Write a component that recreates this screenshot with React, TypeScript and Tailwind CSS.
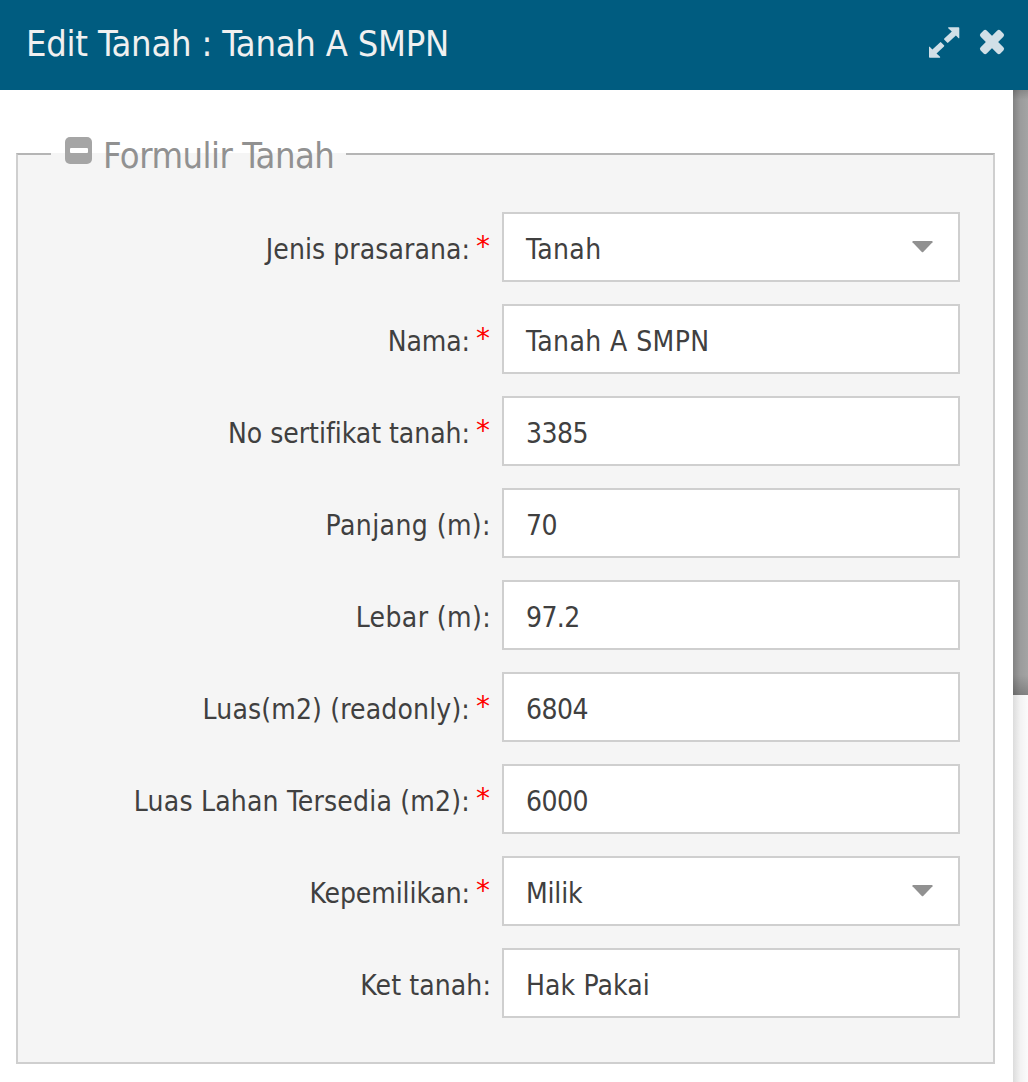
import clsx from "clsx";

type Field = {
  label: string;
  value: string;
  required?: boolean;
  select?: boolean;
  labelClass?: string;
  valueClass?: string;
};

const fields: Field[] = [
  {
    label: "Jenis prasarana:",
    value: "Tanah",
    required: true,
    select: true,
    labelClass: "tracking-[0.07px]",
    valueClass: "tracking-[0.4px]",
  },
  {
    label: "Nama:",
    value: "Tanah A SMPN",
    required: true,
    labelClass: "tracking-[-0.1px]",
    valueClass: "tracking-[0.42px]",
  },
  {
    label: "No sertifikat tanah:",
    value: "3385",
    required: true,
    labelClass: "tracking-[-0.03px]",
    valueClass: "tracking-[-0.5px]",
  },
  {
    label: "Panjang (m):",
    value: "70",
    labelClass: "-mr-px tracking-[0.42px]",
    valueClass: "tracking-[-0.5px]",
  },
  {
    label: "Lebar (m):",
    value: "97.2",
    labelClass: "-mr-px tracking-[0.38px]",
    valueClass: "tracking-[-0.6px]",
  },
  {
    label: "Luas(m2) (readonly):",
    value: "6804",
    required: true,
    labelClass: "tracking-[0.15px]",
    valueClass: "tracking-[-0.5px]",
  },
  {
    label: "Luas Lahan Tersedia (m2):",
    value: "6000",
    required: true,
    labelClass: "tracking-[0.2px]",
    valueClass: "tracking-[-0.5px]",
  },
  {
    label: "Kepemilikan:",
    value: "Milik",
    required: true,
    select: true,
    labelClass: "tracking-[-0.1px]",
    valueClass: "tracking-[-0.2px]",
  },
  {
    label: "Ket tanah:",
    value: "Hak Pakai",
    labelClass: "-mr-px tracking-[0.1px]",
    valueClass: "tracking-[0.12px]",
  },
];

const ExpandIcon = () => (
  <svg width="32" height="33" viewBox="0 0 32 33" fill="#d1dfe7">
    <path
      id="arrow"
      d="M20.2 1.300H30.500q.8 0 .8.800V12.300H30.600L27.900 9.600 20.300 16.600q-.6.6-1.200 0L16.300 13.800q-.6-.6 0-1.200L23.800 5.500 20.200 2.300z"
    />
    <use href="#arrow" transform="rotate(180 16.150 16.500)" />
  </svg>
);

const CloseIcon = () => (
  <svg width="26" height="26" viewBox="0 0 26 26" fill="#d1dfe7">
    <rect x="-1" y="8.700" width="28" height="8.600" rx="2.200" transform="rotate(45 13 13)" />
    <rect x="-1" y="8.700" width="28" height="8.600" rx="2.200" transform="rotate(-45 13 13)" />
  </svg>
);

const FormRow = ({ field }: { field: Field }) => (
  <div className="flex h-[70px] items-center gap-3">
    <div className="flex flex-1 items-center justify-end whitespace-nowrap">
      <span className={clsx("pt-[5px] text-[28px]", field.labelClass)}>{field.label}</span>
      {field.required && (
        <span className="ml-1.5 font-['DejaVu_Sans',sans-serif] text-[28px] text-[#ff0000]">*</span>
      )}
    </div>
    <div className="flex h-full w-[458px] items-center justify-between border-2 border-[#cfcfcf] bg-white pl-[22px] pr-[25px]">
      <span className={clsx("whitespace-nowrap pt-[5px] text-[28px]", field.valueClass)}>
        {field.value}
      </span>
      {field.select && (
        <svg width="21" height="12" viewBox="0 0 21 12" fill="#919191">
          <path d="M1 0h19q1 .5.500 1.300L11.200 11q-.7.7-1.400 0L.5 1.300Q0 .5 1 0z" />
        </svg>
      )}
    </div>
  </div>
);

const App = () => {
  return (
    <div className="flex h-[1082px] w-[1028px] flex-col overflow-hidden bg-white font-['DejaVu_Sans_Condensed','DejaVu_Sans',sans-serif] text-[#404040]">
      <header className="flex h-[90px] shrink-0 items-center bg-[#005c80] pl-[26px] pr-[23px]">
        <h1 className="flex-1 whitespace-nowrap pb-0.5 text-[36px] tracking-[-0.22px] text-[#f0f0f0]">
          Edit Tanah : Tanah A SMPN
        </h1>
        <div className="flex items-start gap-[19px] pb-[5px]">
          <ExpandIcon />
          <div className="pt-[3px]">
            <CloseIcon />
          </div>
        </div>
      </header>

      <div className="flex flex-1">
        <main className="w-[1013px] pl-4 pr-[18px] pt-[39px]">
          <fieldset className="h-[935px] border-2 border-[#cfcfcf] border-t-[#b5b5b5] bg-[#f5f5f5] pl-4 pr-[33px]">
            <legend className="ml-[17px] flex h-[50px] w-[295px] items-center pl-[14px]">
              <span className="mb-2 flex size-[27px] items-center justify-center rounded-[5px] bg-[#a5a5a5]">
                <span className="h-[5px] w-[18px] rounded-[1px] bg-white" />
              </span>
              <span className="ml-[11px] whitespace-nowrap pt-1 text-[36px] tracking-[-0.48px] text-[#919191]">
                Formulir Tanah
              </span>
            </legend>
            <div className="flex flex-col gap-[22px] pt-[33px]">
              {fields.map((field) => (
                <FormRow key={field.label} field={field} />
              ))}
            </div>
          </fieldset>
        </main>
        {/* page behind the window, darkened by its shadow */}
        <div className="flex w-[15px] flex-col">
          <div className="h-[605px] bg-linear-to-r from-[#828282] via-[#9c9c9c] to-[#a4a4a4]">
            <div className="flex h-full flex-col justify-between">
              <div className="h-2.5 bg-linear-to-b from-black/15 to-transparent" />
              <div className="h-5 bg-linear-to-t from-black/20 to-transparent" />
            </div>
          </div>
          <div className="flex-1 bg-linear-to-r from-[#dcdcdc] via-[#f3f3f3] to-[#fbfbfb]" />
        </div>
      </div>
    </div>
  );
};

export default App;
